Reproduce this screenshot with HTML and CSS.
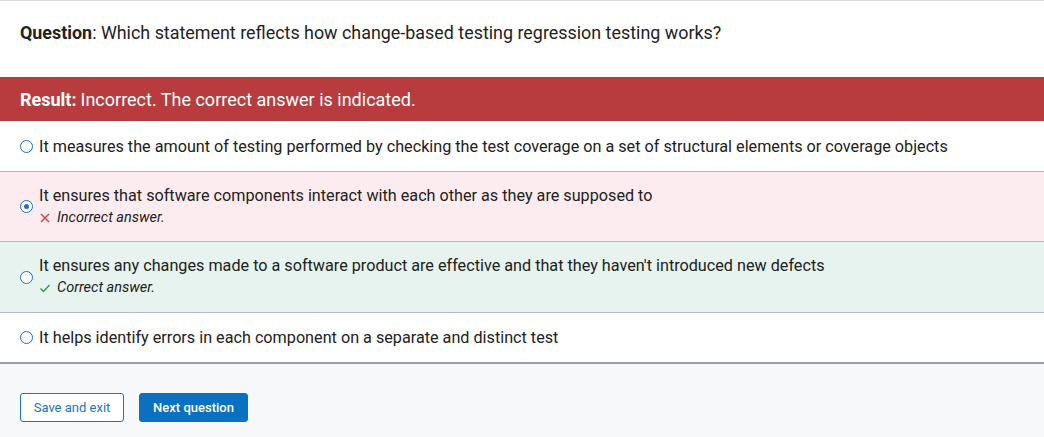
FILE: index.html
```html
<!DOCTYPE html>
<html>
<head>
<meta charset="utf-8">
<link rel="stylesheet" href="styles.css">
</head>
<body>
<div class="page">
  <div class="question"><b>Question</b>: Which statement reflects how change-based testing regression testing works?</div>
  <div class="result"><b>Result:</b> Incorrect. The correct answer is indicated.</div>
  <div class="options">
    <div class="option option-first">
      <span class="radio"></span>
      <div class="opt-body"><div class="opt-text">It measures the amount of testing performed by checking the test coverage on a set of structural elements or coverage objects</div></div>
    </div>
    <div class="option option-wrong">
      <span class="radio radio-checked"></span>
      <div class="opt-body">
        <div class="opt-text">It ensures that software components interact with each other as they are supposed to</div>
        <div class="feedback"><svg class="fb-icon" width="12" height="12" viewBox="0 0 12 12"><path d="M2 2 L10 10 M10 2 L2 10" stroke="#c8403f" stroke-width="1.4" fill="none"/></svg><i>Incorrect answer.</i></div>
      </div>
    </div>
    <div class="option option-right">
      <span class="radio"></span>
      <div class="opt-body">
        <div class="opt-text">It ensures any changes made to a software product are effective and that they haven't introduced new defects</div>
        <div class="feedback"><svg class="fb-icon" width="12" height="12" viewBox="0 0 12 12"><path d="M1.5 6.5 L4.5 9.5 L10.5 3" stroke="#2e9a4a" stroke-width="1.4" fill="none"/></svg><i>Correct answer.</i></div>
      </div>
    </div>
    <div class="option option-last">
      <span class="radio"></span>
      <div class="opt-body"><div class="opt-text">It helps identify errors in each component on a separate and distinct test</div></div>
    </div>
  </div>
  <div class="footer">
    <button class="btn btn-outline">Save and exit</button>
    <button class="btn btn-primary">Next question</button>
  </div>
</div>
</body>
</html>
```

FILE: styles.css
```css
html, body {
  margin: 0;
  padding: 0;
}
body {
  font-family: Roboto, "Liberation Sans", sans-serif;
  color: #222;
  background: #f6f8fa;
}
.page {
  width: 1044px;
  height: 437px;
  overflow: hidden;
  display: flex;
  flex-direction: column;
}
.question {
  border-top: 1px solid #dcdcdc;
  background: #fff;
  height: 77px;
  flex: none;
  box-sizing: border-box;
  padding: 20px 20px 0;
  font-size: 17.9px;
  line-height: 24px;
}
.question b {
  font-weight: 700;
}
.result {
  background: #b83c3e;
  color: #fff;
  height: 44px;
  flex: none;
  box-sizing: border-box;
  padding: 0 20px;
  display: flex;
  align-items: center;
  font-size: 18px;
  gap: 4px;
}
.result b {
  font-weight: 700;
}
.options {
  background: #fff;
  border-bottom: 2px solid #9aa0aa;
  box-shadow: 0 2px 3px rgba(0,0,0,0.08);
  flex: none;
}
.option {
  display: flex;
  align-items: center;
  padding: 0 20px;
  gap: 6px;
  border-bottom: 1px solid #b9bac4;
  box-sizing: border-box;
  font-size: 16.2px;
}
.option-first {
  height: 51px;
}
.option-last {
  border-bottom: none;
  height: 49px;
}
.option-wrong {
  background: #fdecef;
  height: 70px;
}
.option-right {
  background: #e6f3ef;
  height: 71px;
}
.radio {
  width: 13px;
  height: 13px;
  border: 1.4px solid #1b6fc6;
  border-radius: 50%;
  box-sizing: border-box;
  flex: none;
  display: flex;
  align-items: center;
  justify-content: center;
  background: #fff;
}
.radio-checked::after {
  content: "";
  width: 5px;
  height: 5px;
  border-radius: 50%;
  background: #1b6fc6;
}
.opt-text {
  line-height: 21px;
  color: #212121;
}
.feedback {
  display: flex;
  align-items: center;
  gap: 6px;
  font-size: 14.5px;
  line-height: 22px;
  margin-top: 1px;
  color: #212121;
}
.fb-icon {
  flex: none;
}
.footer {
  flex: 1;
  background: #f6f8fa;
  padding: 29px 20px 0;
  display: flex;
  gap: 15px;
  align-items: flex-start;
}
.btn {
  font-family: Roboto, "Liberation Sans", sans-serif;
  font-size: 13px;
  height: 29px;
  border-radius: 3px;
  padding: 0;
  white-space: nowrap;
  cursor: pointer;
}
.btn-outline {
  background: #fff;
  border: 1px solid #1b73c4;
  color: #1b73c4;
  width: 104px;
}
.btn-primary {
  background: #0a71c2;
  border: 1px solid #0a71c2;
  color: #fff;
  font-weight: 500;
  width: 109px;
}
```
